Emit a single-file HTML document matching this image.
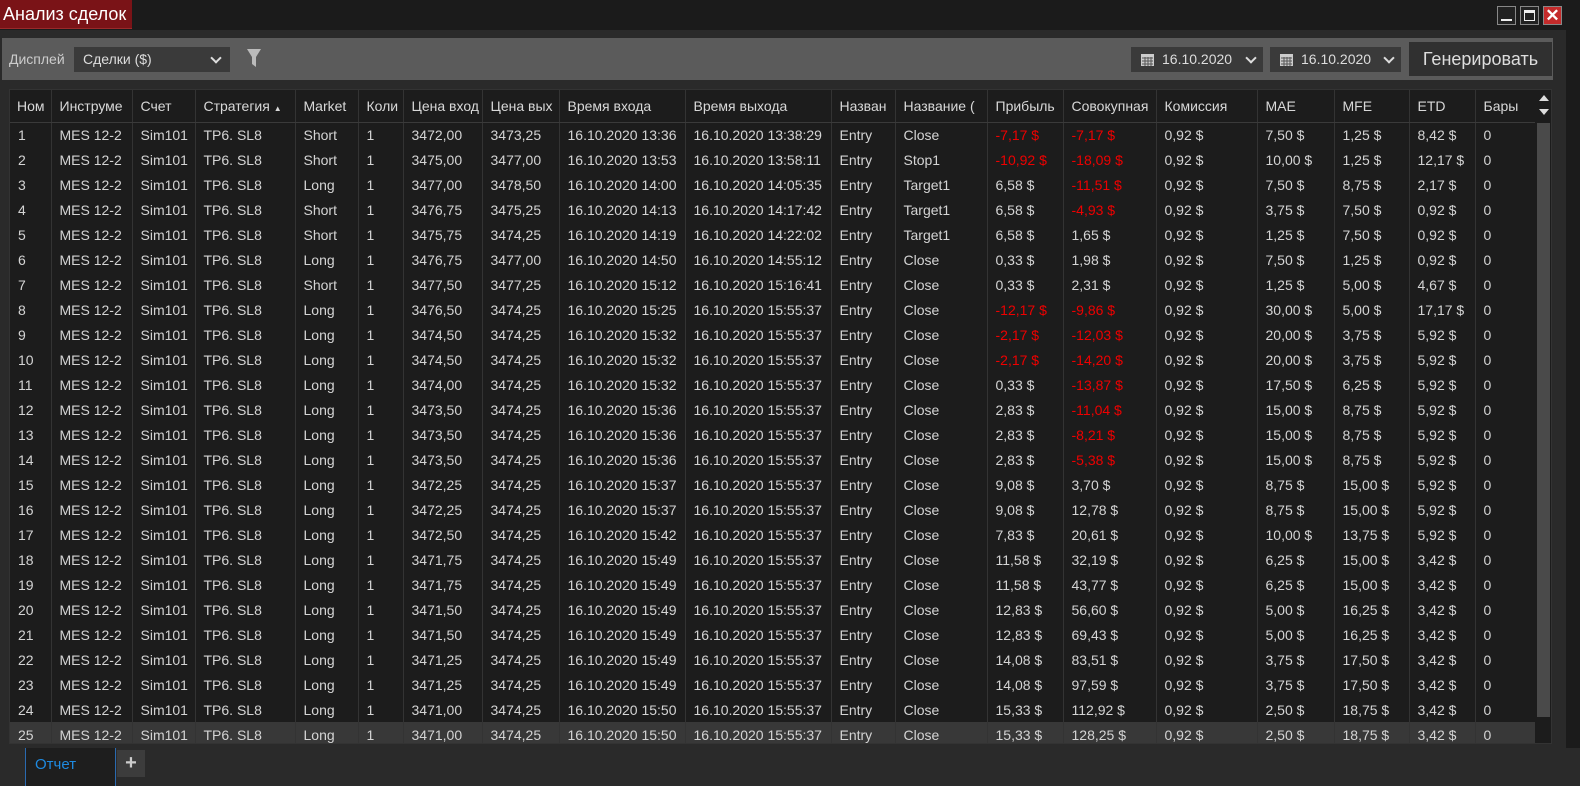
<!DOCTYPE html>
<html><head><meta charset="utf-8">
<style>
*{margin:0;padding:0;box-sizing:border-box}
body{width:1580px;height:786px;background:#1b1b1b;font-family:"Liberation Sans","Noto Sans CJK SC",sans-serif;color:#d4d4d4;position:relative;overflow:hidden;font-size:14px}
.title{position:absolute;left:0;top:0;width:132px;height:29px;background:#7a1317;color:#fff;font-size:18px;line-height:29px;padding-left:3px;border-bottom:1px solid #9a2a2a}
.wb{position:absolute;top:6px;width:19px;height:19px;border:1px solid #888;background:#222}
.panel{position:absolute;left:0;top:30px;width:1566px;height:718px;background:#2a2a2a}
.tool{position:absolute;left:2px;top:8px;width:1551px;height:42px;background:#5b5b5b}
.lbl{position:absolute;left:7px;top:13px;font-size:14px;color:#ccc}
.sel{position:absolute;background:#3a3a3a;height:25px;top:9px;color:#ddd;font-size:14px;line-height:25px}
.chev{position:absolute;top:7px;width:8px;height:8px;border-right:2.5px solid #ddd;border-bottom:2.5px solid #ddd;transform:rotate(45deg)}
.gen{position:absolute;left:1407px;top:4px;width:143px;height:34px;background:#303030;color:#ddd;font-size:18px;line-height:34px;text-align:center}
.tbl{position:absolute;left:9px;top:89px;width:1543px;height:655px;background:#1c1c1c;border:1px solid #333;overflow:hidden}
table{border-collapse:collapse;table-layout:fixed;position:absolute;left:0;top:0;width:1525px}
td,th{height:25px;white-space:nowrap;overflow:hidden;border-right:1px solid #333;padding-left:8px;font-weight:normal;text-align:left;font-size:14px}
th{height:32px;border-bottom:1px solid #3a3a3a;color:#d8d8d8}
tr.s td{background:#383838}
.r{color:#e00}
.sb{position:absolute;left:1525px;top:0;width:17px;height:655px;background:#1c1c1c}
.thumb{position:absolute;left:1527px;top:33px;width:13px;height:594px;background:#4a4a4a}
.tabs{position:absolute;left:0;top:748px;width:1580px;height:38px;background:#2a2a2a}
</style></head><body>
<div class="title">Анализ сделок</div>
<div class="wb" style="left:1497px"><div style="position:absolute;left:3px;top:12px;width:11px;height:2px;background:#eee"></div></div>
<div class="wb" style="left:1520px"><div style="position:absolute;left:3px;top:3px;width:11px;height:11px;border:1px solid #eee;border-top:3px solid #eee"></div></div>
<div class="wb" style="left:1543px;background:#c42b2b;color:#fff;font-weight:bold;font-size:17px;line-height:17px;text-align:center">✕</div>
<div class="panel">
<div class="tool">
<div class="lbl">Дисплей</div>
<div class="sel" style="left:72px;width:156px;padding-left:9px">Сделки ($)<div class="chev" style="left:138px"></div></div>
<svg style="position:absolute;left:244px;top:10px" width="16" height="20"><path d="M1 1h14l-5 8v10l-4-3V9z" fill="#bbb"/></svg>
<div class="sel" style="left:1129px;width:132px;padding-left:31px">16.10.2020<svg style="position:absolute;left:10px;top:7px" width="13" height="12"><rect x="0" y="0" width="13" height="12" fill="#ccc"/><path d="M1 4h11M1 7h11M1 10h11M4 3v9M7 3v9M10 3v9" stroke="#555" stroke-width="1"/></svg><div class="chev" style="left:116px"></div></div>
<div class="sel" style="left:1268px;width:131px;padding-left:31px">16.10.2020<svg style="position:absolute;left:10px;top:7px" width="13" height="12"><rect x="0" y="0" width="13" height="12" fill="#ccc"/><path d="M1 4h11M1 7h11M1 10h11M4 3v9M7 3v9M10 3v9" stroke="#555" stroke-width="1"/></svg><div class="chev" style="left:115px"></div></div>
<div class="gen">Генерировать</div>
</div>
</div>
<div class="tbl">
<table>
<colgroup><col style="width:41px"><col style="width:81px"><col style="width:63px"><col style="width:100px"><col style="width:63px"><col style="width:45px"><col style="width:79px"><col style="width:77px"><col style="width:126px"><col style="width:146px"><col style="width:64px"><col style="width:92px"><col style="width:76px"><col style="width:93px"><col style="width:101px"><col style="width:77px"><col style="width:75px"><col style="width:66px"><col style="width:60px"></colgroup>
<tr><th style="padding-left:7px">Ном</th><th>Инструме</th><th>Счет</th><th>Стратегия <span style="font-size:8px">▲</span></th><th>Market</th><th>Коли</th><th>Цена вход</th><th>Цена вых</th><th>Время входа</th><th>Время выхода</th><th>Назван</th><th>Название (</th><th>Прибыль</th><th>Совокупная</th><th>Комиссия</th><th>MAE</th><th>MFE</th><th>ETD</th><th>Бары</th></tr>
<tr><td>1</td><td>MES 12-2</td><td>Sim101</td><td>TP6. SL8</td><td>Short</td><td>1</td><td>3472,00</td><td>3473,25</td><td>16.10.2020 13:36</td><td>16.10.2020 13:38:29</td><td>Entry</td><td>Close</td><td class="r">-7,17 $</td><td class="r">-7,17 $</td><td>0,92 $</td><td>7,50 $</td><td>1,25 $</td><td>8,42 $</td><td>0</td></tr>
<tr><td>2</td><td>MES 12-2</td><td>Sim101</td><td>TP6. SL8</td><td>Short</td><td>1</td><td>3475,00</td><td>3477,00</td><td>16.10.2020 13:53</td><td>16.10.2020 13:58:11</td><td>Entry</td><td>Stop1</td><td class="r">-10,92 $</td><td class="r">-18,09 $</td><td>0,92 $</td><td>10,00 $</td><td>1,25 $</td><td>12,17 $</td><td>0</td></tr>
<tr><td>3</td><td>MES 12-2</td><td>Sim101</td><td>TP6. SL8</td><td>Long</td><td>1</td><td>3477,00</td><td>3478,50</td><td>16.10.2020 14:00</td><td>16.10.2020 14:05:35</td><td>Entry</td><td>Target1</td><td>6,58 $</td><td class="r">-11,51 $</td><td>0,92 $</td><td>7,50 $</td><td>8,75 $</td><td>2,17 $</td><td>0</td></tr>
<tr><td>4</td><td>MES 12-2</td><td>Sim101</td><td>TP6. SL8</td><td>Short</td><td>1</td><td>3476,75</td><td>3475,25</td><td>16.10.2020 14:13</td><td>16.10.2020 14:17:42</td><td>Entry</td><td>Target1</td><td>6,58 $</td><td class="r">-4,93 $</td><td>0,92 $</td><td>3,75 $</td><td>7,50 $</td><td>0,92 $</td><td>0</td></tr>
<tr><td>5</td><td>MES 12-2</td><td>Sim101</td><td>TP6. SL8</td><td>Short</td><td>1</td><td>3475,75</td><td>3474,25</td><td>16.10.2020 14:19</td><td>16.10.2020 14:22:02</td><td>Entry</td><td>Target1</td><td>6,58 $</td><td>1,65 $</td><td>0,92 $</td><td>1,25 $</td><td>7,50 $</td><td>0,92 $</td><td>0</td></tr>
<tr><td>6</td><td>MES 12-2</td><td>Sim101</td><td>TP6. SL8</td><td>Long</td><td>1</td><td>3476,75</td><td>3477,00</td><td>16.10.2020 14:50</td><td>16.10.2020 14:55:12</td><td>Entry</td><td>Close</td><td>0,33 $</td><td>1,98 $</td><td>0,92 $</td><td>7,50 $</td><td>1,25 $</td><td>0,92 $</td><td>0</td></tr>
<tr><td>7</td><td>MES 12-2</td><td>Sim101</td><td>TP6. SL8</td><td>Short</td><td>1</td><td>3477,50</td><td>3477,25</td><td>16.10.2020 15:12</td><td>16.10.2020 15:16:41</td><td>Entry</td><td>Close</td><td>0,33 $</td><td>2,31 $</td><td>0,92 $</td><td>1,25 $</td><td>5,00 $</td><td>4,67 $</td><td>0</td></tr>
<tr><td>8</td><td>MES 12-2</td><td>Sim101</td><td>TP6. SL8</td><td>Long</td><td>1</td><td>3476,50</td><td>3474,25</td><td>16.10.2020 15:25</td><td>16.10.2020 15:55:37</td><td>Entry</td><td>Close</td><td class="r">-12,17 $</td><td class="r">-9,86 $</td><td>0,92 $</td><td>30,00 $</td><td>5,00 $</td><td>17,17 $</td><td>0</td></tr>
<tr><td>9</td><td>MES 12-2</td><td>Sim101</td><td>TP6. SL8</td><td>Long</td><td>1</td><td>3474,50</td><td>3474,25</td><td>16.10.2020 15:32</td><td>16.10.2020 15:55:37</td><td>Entry</td><td>Close</td><td class="r">-2,17 $</td><td class="r">-12,03 $</td><td>0,92 $</td><td>20,00 $</td><td>3,75 $</td><td>5,92 $</td><td>0</td></tr>
<tr><td>10</td><td>MES 12-2</td><td>Sim101</td><td>TP6. SL8</td><td>Long</td><td>1</td><td>3474,50</td><td>3474,25</td><td>16.10.2020 15:32</td><td>16.10.2020 15:55:37</td><td>Entry</td><td>Close</td><td class="r">-2,17 $</td><td class="r">-14,20 $</td><td>0,92 $</td><td>20,00 $</td><td>3,75 $</td><td>5,92 $</td><td>0</td></tr>
<tr><td>11</td><td>MES 12-2</td><td>Sim101</td><td>TP6. SL8</td><td>Long</td><td>1</td><td>3474,00</td><td>3474,25</td><td>16.10.2020 15:32</td><td>16.10.2020 15:55:37</td><td>Entry</td><td>Close</td><td>0,33 $</td><td class="r">-13,87 $</td><td>0,92 $</td><td>17,50 $</td><td>6,25 $</td><td>5,92 $</td><td>0</td></tr>
<tr><td>12</td><td>MES 12-2</td><td>Sim101</td><td>TP6. SL8</td><td>Long</td><td>1</td><td>3473,50</td><td>3474,25</td><td>16.10.2020 15:36</td><td>16.10.2020 15:55:37</td><td>Entry</td><td>Close</td><td>2,83 $</td><td class="r">-11,04 $</td><td>0,92 $</td><td>15,00 $</td><td>8,75 $</td><td>5,92 $</td><td>0</td></tr>
<tr><td>13</td><td>MES 12-2</td><td>Sim101</td><td>TP6. SL8</td><td>Long</td><td>1</td><td>3473,50</td><td>3474,25</td><td>16.10.2020 15:36</td><td>16.10.2020 15:55:37</td><td>Entry</td><td>Close</td><td>2,83 $</td><td class="r">-8,21 $</td><td>0,92 $</td><td>15,00 $</td><td>8,75 $</td><td>5,92 $</td><td>0</td></tr>
<tr><td>14</td><td>MES 12-2</td><td>Sim101</td><td>TP6. SL8</td><td>Long</td><td>1</td><td>3473,50</td><td>3474,25</td><td>16.10.2020 15:36</td><td>16.10.2020 15:55:37</td><td>Entry</td><td>Close</td><td>2,83 $</td><td class="r">-5,38 $</td><td>0,92 $</td><td>15,00 $</td><td>8,75 $</td><td>5,92 $</td><td>0</td></tr>
<tr><td>15</td><td>MES 12-2</td><td>Sim101</td><td>TP6. SL8</td><td>Long</td><td>1</td><td>3472,25</td><td>3474,25</td><td>16.10.2020 15:37</td><td>16.10.2020 15:55:37</td><td>Entry</td><td>Close</td><td>9,08 $</td><td>3,70 $</td><td>0,92 $</td><td>8,75 $</td><td>15,00 $</td><td>5,92 $</td><td>0</td></tr>
<tr><td>16</td><td>MES 12-2</td><td>Sim101</td><td>TP6. SL8</td><td>Long</td><td>1</td><td>3472,25</td><td>3474,25</td><td>16.10.2020 15:37</td><td>16.10.2020 15:55:37</td><td>Entry</td><td>Close</td><td>9,08 $</td><td>12,78 $</td><td>0,92 $</td><td>8,75 $</td><td>15,00 $</td><td>5,92 $</td><td>0</td></tr>
<tr><td>17</td><td>MES 12-2</td><td>Sim101</td><td>TP6. SL8</td><td>Long</td><td>1</td><td>3472,50</td><td>3474,25</td><td>16.10.2020 15:42</td><td>16.10.2020 15:55:37</td><td>Entry</td><td>Close</td><td>7,83 $</td><td>20,61 $</td><td>0,92 $</td><td>10,00 $</td><td>13,75 $</td><td>5,92 $</td><td>0</td></tr>
<tr><td>18</td><td>MES 12-2</td><td>Sim101</td><td>TP6. SL8</td><td>Long</td><td>1</td><td>3471,75</td><td>3474,25</td><td>16.10.2020 15:49</td><td>16.10.2020 15:55:37</td><td>Entry</td><td>Close</td><td>11,58 $</td><td>32,19 $</td><td>0,92 $</td><td>6,25 $</td><td>15,00 $</td><td>3,42 $</td><td>0</td></tr>
<tr><td>19</td><td>MES 12-2</td><td>Sim101</td><td>TP6. SL8</td><td>Long</td><td>1</td><td>3471,75</td><td>3474,25</td><td>16.10.2020 15:49</td><td>16.10.2020 15:55:37</td><td>Entry</td><td>Close</td><td>11,58 $</td><td>43,77 $</td><td>0,92 $</td><td>6,25 $</td><td>15,00 $</td><td>3,42 $</td><td>0</td></tr>
<tr><td>20</td><td>MES 12-2</td><td>Sim101</td><td>TP6. SL8</td><td>Long</td><td>1</td><td>3471,50</td><td>3474,25</td><td>16.10.2020 15:49</td><td>16.10.2020 15:55:37</td><td>Entry</td><td>Close</td><td>12,83 $</td><td>56,60 $</td><td>0,92 $</td><td>5,00 $</td><td>16,25 $</td><td>3,42 $</td><td>0</td></tr>
<tr><td>21</td><td>MES 12-2</td><td>Sim101</td><td>TP6. SL8</td><td>Long</td><td>1</td><td>3471,50</td><td>3474,25</td><td>16.10.2020 15:49</td><td>16.10.2020 15:55:37</td><td>Entry</td><td>Close</td><td>12,83 $</td><td>69,43 $</td><td>0,92 $</td><td>5,00 $</td><td>16,25 $</td><td>3,42 $</td><td>0</td></tr>
<tr><td>22</td><td>MES 12-2</td><td>Sim101</td><td>TP6. SL8</td><td>Long</td><td>1</td><td>3471,25</td><td>3474,25</td><td>16.10.2020 15:49</td><td>16.10.2020 15:55:37</td><td>Entry</td><td>Close</td><td>14,08 $</td><td>83,51 $</td><td>0,92 $</td><td>3,75 $</td><td>17,50 $</td><td>3,42 $</td><td>0</td></tr>
<tr><td>23</td><td>MES 12-2</td><td>Sim101</td><td>TP6. SL8</td><td>Long</td><td>1</td><td>3471,25</td><td>3474,25</td><td>16.10.2020 15:49</td><td>16.10.2020 15:55:37</td><td>Entry</td><td>Close</td><td>14,08 $</td><td>97,59 $</td><td>0,92 $</td><td>3,75 $</td><td>17,50 $</td><td>3,42 $</td><td>0</td></tr>
<tr><td>24</td><td>MES 12-2</td><td>Sim101</td><td>TP6. SL8</td><td>Long</td><td>1</td><td>3471,00</td><td>3474,25</td><td>16.10.2020 15:50</td><td>16.10.2020 15:55:37</td><td>Entry</td><td>Close</td><td>15,33 $</td><td>112,92 $</td><td>0,92 $</td><td>2,50 $</td><td>18,75 $</td><td>3,42 $</td><td>0</td></tr>
<tr class="s"><td>25</td><td>MES 12-2</td><td>Sim101</td><td>TP6. SL8</td><td>Long</td><td>1</td><td>3471,00</td><td>3474,25</td><td>16.10.2020 15:50</td><td>16.10.2020 15:55:37</td><td>Entry</td><td>Close</td><td>15,33 $</td><td>128,25 $</td><td>0,92 $</td><td>2,50 $</td><td>18,75 $</td><td>3,42 $</td><td>0</td></tr>
</table>
<div class="sb"></div>
<div class="thumb"></div>
<div style="position:absolute;left:1529px;top:5px;width:0;height:0;border-left:5px solid transparent;border-right:5px solid transparent;border-bottom:6px solid #ddd"></div>
<div style="position:absolute;left:1529px;top:19px;width:0;height:0;border-left:5px solid transparent;border-right:5px solid transparent;border-top:6px solid #ddd"></div>
</div>
<div class="tabs">
<div style="position:absolute;left:25px;top:0;width:91px;height:38px;background:#1e1e1e;border-left:1px solid #2a6ab0;border-right:1px solid #2a6ab0;color:#1e8ae0;font-size:15px;line-height:34px;padding-left:9px">Отчет</div>
<div style="position:absolute;left:117px;top:2px;width:28px;height:27px;background:#3c3c3c;color:#ccc;font-size:20px;line-height:26px;text-align:center;font-weight:bold">+</div>
</div>
</body></html>
